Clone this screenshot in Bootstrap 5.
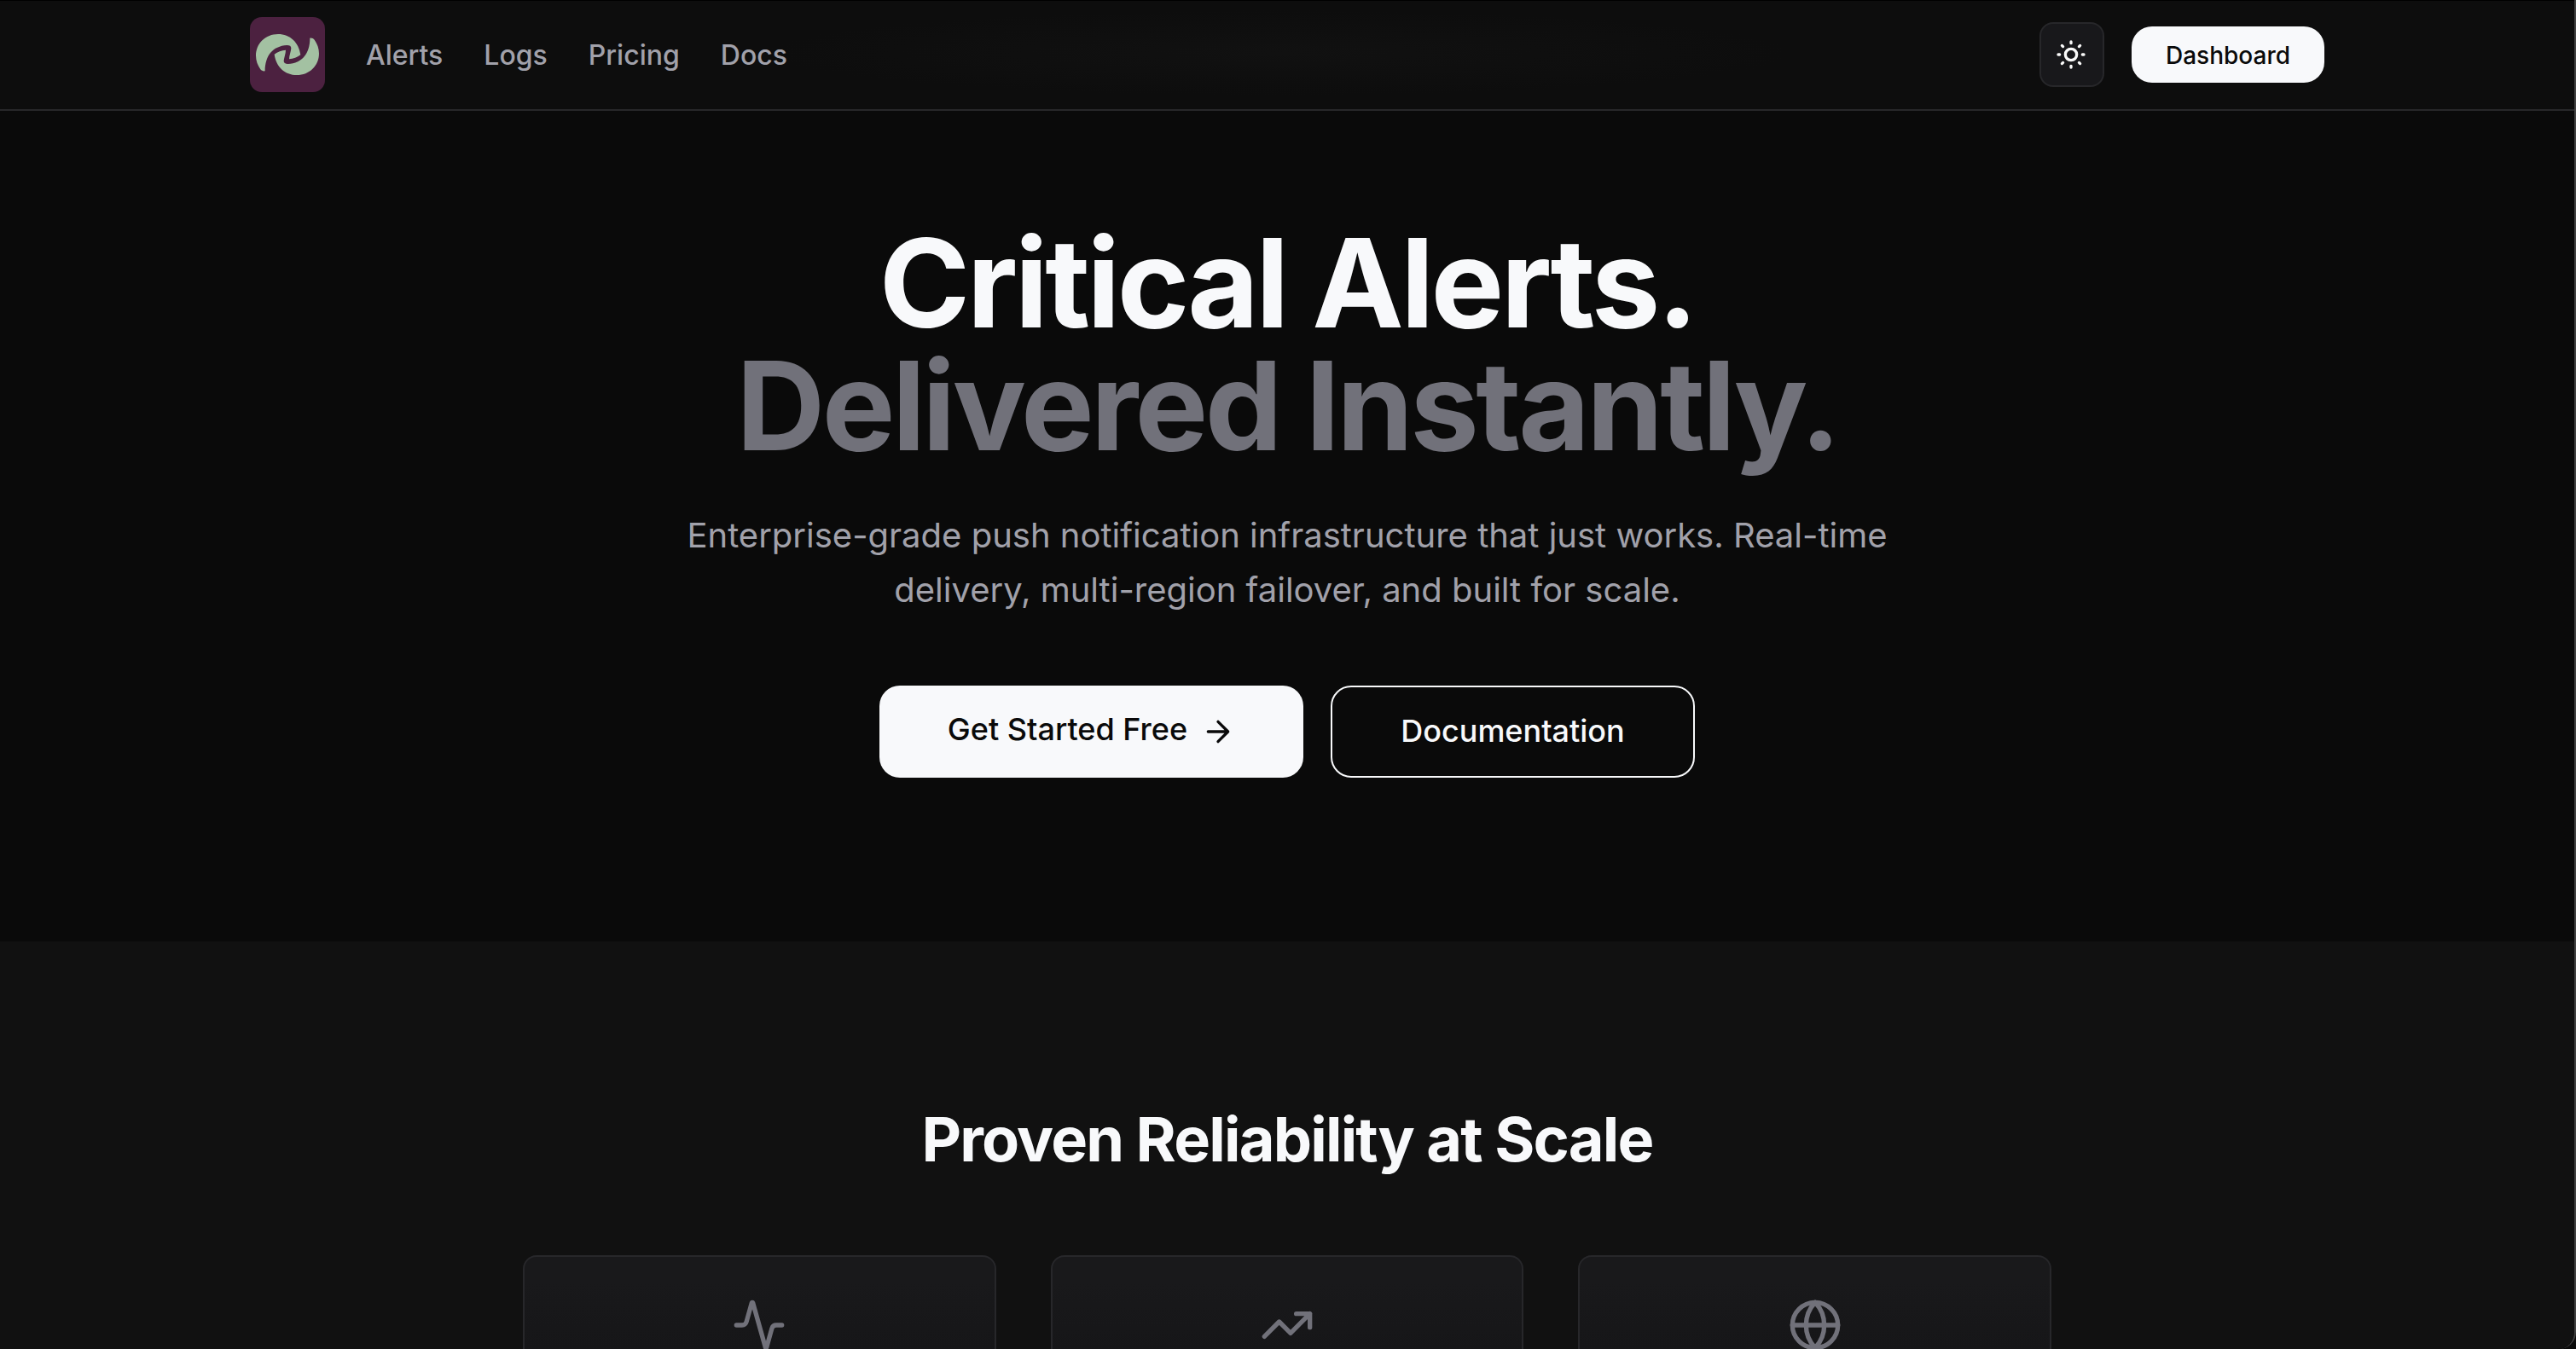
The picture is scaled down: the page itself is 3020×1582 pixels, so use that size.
<!DOCTYPE html>
<html lang="en">
<head>
    <meta charset="UTF-8">
    <meta name="viewport" content="width=device-width, initial-scale=1.0">
    <title>Critical Alerts</title>
    <!-- Bootstrap CSS -->
    <link href="https://cdn.jsdelivr.net/npm/bootstrap@5.3.1/dist/css/bootstrap.min.css" rel="stylesheet">
    <style>
        html, body {
            height: 1582px;
            overflow: hidden;
        }

        html {
            background-color: #0a0a0a;
        }

        body {
            background-color: #0a0a0a;
            color: #fafafa;
            font-family: Inter, 'Liberation Sans', sans-serif;
            border-right: 2px solid #424242;
            border-bottom-right-radius: 20px;
        }

        .site-nav {
            height: 130px;
            padding: 0;
            background: radial-gradient(600px 50px at 1500px 62px, #111 0%, #0d0d0d 100%) #0d0d0d;
            border-bottom: 2px solid #27272a;
            box-shadow: inset 0 1px 0 #000;
        }

        .nav-inner {
            width: 2560px;
            max-width: 2560px;
            padding: 0 64px;
        }

        .brand-logo {
            width: 88px;
            height: 88px;
        }

        .site-links {
            gap: 48px;
            margin-left: 48px;
            padding-top: 2px;
        }

        .site-links .nav-link {
            padding: 0;
            color: #a1a1aa;
            font-size: 32px;
            font-weight: 500;
            line-height: 48px;
        }

        .nav-actions {
            gap: 32px;
        }

        .theme-toggle {
            width: 76px;
            height: 76px;
            padding: 0 2px 0 0;
            background-color: #18181b;
            border: 2px solid #27272a;
            border-radius: 16px;
            color: #fafafa;
        }

        .btn-light-solid, .btn-light-solid:hover {
            background-color: #f8f9fb;
            border: 0;
            color: #0a0a0a;
            font-weight: 500;
        }

        .btn-dash {
            width: 226px;
            height: 66px;
            padding: 2px 0 0;
            border-radius: 24px;
            font-size: 28px;
        }

        .hero {
            height: 974px;
            padding-top: 130px;
        }

        .hero-title {
            margin: 0;
            color: #f8f9fb;
            font-size: 144px;
            font-weight: 700;
            line-height: 144px;
            letter-spacing: -0.025em;
        }

        .hero-title span {
            color: #71717a;
        }

        .hero-copy {
            width: 1480px;
            margin: 48px auto 80px;
            color: #a1a1aa;
            font-size: 40px;
            line-height: 64px;
        }

        .hero-actions {
            gap: 32px;
        }

        .btn-cta {
            height: 108px;
            border-radius: 24px;
            font-size: 36px;
            font-weight: 500;
            padding: 0;
        }

        .btn-start {
            width: 497px;
        }

        .btn-start span {
            padding-bottom: 6px;
        }

        .btn-docs, .btn-docs:hover {
            width: 427px;
            padding-bottom: 2px;
            border: 2px solid #f8f9fb;
            color: #f8f9fb;
        }

        .stats {
            height: 478px;
            padding-top: 188px;
            background-color: #111;
            border-bottom-right-radius: 20px;
            overflow: hidden;
        }

        .stats h2 {
            margin: 0 0 92px;
            color: #f8f9fb;
            font-size: 72px;
            font-weight: 700;
            line-height: 88px;
            letter-spacing: -0.025em;
        }

        .stat-grid {
            width: 1792px;
            gap: 64px;
        }

        .stat-card {
            flex: 1 1 0;
            height: 300px;
            padding-top: 48px;
            background: linear-gradient(#19191b 0, #19191b 30px, #161618 110px);
            border: 2px solid #27272a;
            border-radius: 16px;
            color: #71717a;
        }

        .line-icon {
            fill: none;
            stroke: currentColor;
            stroke-width: 2;
            stroke-linecap: round;
            stroke-linejoin: round;
        }
    </style>
</head>
<body>

<!-- Navbar -->
<nav class="navbar site-nav">
    <div class="container-fluid nav-inner d-flex flex-nowrap align-items-center mx-auto">
        <svg class="brand-logo" viewBox="39 30 264 264">
            <rect x="39" y="30" width="264" height="264" rx="42" fill="#4c2140"/>
            <g fill="#a3c1a2">
                <path id="swirl" d="M92 220C86 221 80 219 76 214C66 200 60 184 60 166C60 123 94 90 138 90C180 90 211 119 217 163C205 172 192 177 177 178C177 166 183 151 184 140C184 132 179 129 169 129C119 132 92 166 92 220Z"/>
                <use href="#swirl" transform="rotate(180 171 162)"/>
            </g>
        </svg>
        <div class="nav site-links flex-nowrap me-auto">
            <a class="nav-link" href="#">Alerts</a>
            <a class="nav-link" href="#">Logs</a>
            <a class="nav-link" href="#">Pricing</a>
            <a class="nav-link" href="#">Docs</a>
        </div>
        <div class="nav-actions d-flex align-items-center">
            <button class="btn theme-toggle d-flex align-items-center justify-content-center" type="button" aria-label="Toggle theme">
                <svg class="line-icon" width="40" height="40" viewBox="0 0 24 24">
                    <circle cx="12" cy="12" r="4"/>
                    <path d="M12 3v1M12 20v1M3 12h1M20 12h1M18.364 5.636l-.707.707M6.343 17.657l-.707.707M5.636 5.636l.707.707M17.657 17.657l.707.707"/>
                </svg>
            </button>
            <a class="btn btn-light-solid btn-dash d-flex align-items-center justify-content-center" href="#">Dashboard</a>
        </div>
    </div>
</nav>

<!-- Hero -->
<section class="hero text-center">
    <h1 class="hero-title">Critical Alerts.<br><span>Delivered Instantly.</span></h1>
    <p class="hero-copy">Enterprise-grade push notification infrastructure that just works. Real-time delivery, multi-region failover, and built for scale.</p>
    <div class="hero-actions d-flex justify-content-center">
        <a class="btn btn-light-solid btn-cta btn-start d-flex align-items-center justify-content-center" href="#">
            <span>Get Started Free</span>
            <svg class="line-icon ms-3" width="40" height="40" viewBox="0 0 24 24"><path d="M5 12h14M12 5l7 7-7 7"/></svg>
        </a>
        <a class="btn btn-cta btn-docs d-flex align-items-center justify-content-center" href="#">Documentation</a>
    </div>
</section>

<!-- Stats -->
<section class="stats text-center">
    <h2>Proven Reliability at Scale</h2>
    <div class="stat-grid d-flex mx-auto">
        <div class="stat-card">
            <svg class="line-icon" width="64" height="64" viewBox="0 0 24 24"><path d="M22 12h-2.480a2 2 0 0 0-1.930 1.460l-2.350 8.360a.25.25 0 0 1-.48 0L9.240 2.180a.25.25 0 0 0-.48 0l-2.350 8.360A2 2 0 0 1 4.490 12H2"/></svg>
        </div>
        <div class="stat-card">
            <svg class="line-icon" width="64" height="64" viewBox="0 0 24 24"><path d="M22 7l-8.500 8.500-5-5L2 17M16 7h6v6"/></svg>
        </div>
        <div class="stat-card">
            <svg class="line-icon" width="64" height="64" viewBox="0 0 24 24"><circle cx="12" cy="12" r="10"/><path d="M12 2a14.500 14.500 0 0 0 0 20 14.500 14.500 0 0 0 0-20M2 12h20"/></svg>
        </div>
    </div>
</section>

<!-- Bootstrap JS -->
<script src="https://cdn.jsdelivr.net/npm/bootstrap@5.3.1/dist/js/bootstrap.bundle.min.js"></script>
</body>
</html>
